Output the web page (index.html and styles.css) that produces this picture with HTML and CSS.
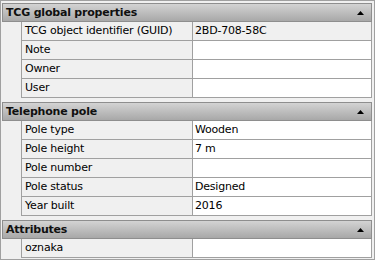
FILE: index.html
```html
<!DOCTYPE html>
<html>
<head>
    <title>Properties</title>
    <link rel="stylesheet" href="styles.css">
</head>
<body>
    <div class="property-grid">
        <!-- TCG global properties -->
        <div class="section">
            <div class="section-header">
                <span>TCG global properties</span>
                <svg class="collapse" width="7" height="4" viewBox="0 0 7 4"><path d="M3.5 0 L7 4 L0 4 Z"/></svg>
            </div>
            <div class="rows">
                <div class="row readonly"><div class="label">TCG object identifier (GUID)</div><div class="value">2BD-708-58C</div></div>
                <div class="row"><div class="label">Note</div><div class="value"></div></div>
                <div class="row"><div class="label">Owner</div><div class="value"></div></div>
                <div class="row"><div class="label">User</div><div class="value"></div></div>
            </div>
        </div>

        <!-- Telephone pole -->
        <div class="section">
            <div class="section-header">
                <span>Telephone pole</span>
                <svg class="collapse" width="7" height="4" viewBox="0 0 7 4"><path d="M3.5 0 L7 4 L0 4 Z"/></svg>
            </div>
            <div class="rows">
                <div class="row"><div class="label">Pole type</div><div class="value">Wooden</div></div>
                <div class="row"><div class="label">Pole height</div><div class="value">7 m</div></div>
                <div class="row"><div class="label">Pole number</div><div class="value"></div></div>
                <div class="row"><div class="label">Pole status</div><div class="value">Designed</div></div>
                <div class="row"><div class="label">Year built</div><div class="value">2016</div></div>
            </div>
        </div>

        <!-- Attributes -->
        <div class="section">
            <div class="section-header">
                <span>Attributes</span>
                <svg class="collapse" width="7" height="4" viewBox="0 0 7 4"><path d="M3.5 0 L7 4 L0 4 Z"/></svg>
            </div>
            <div class="rows">
                <div class="row"><div class="label">oznaka</div><div class="value"></div></div>
            </div>
        </div>
    </div>
</body>
</html>
```

FILE: styles.css
```css
body {
    margin: 0;
    font-family: "DejaVu Sans", sans-serif;
    font-size: 11px;
    letter-spacing: -0.2px;
    color: #000;
    background-color: #f0f0f0;
}

/* outer frame of the grid */
.property-grid {
    width: 375px;
    height: 260px;
    box-sizing: border-box;
    border: 1px solid #a0a0a0;
    padding: 2px 2px 0 1px;
    display: flex;
    flex-direction: column;
    gap: 4px;
    background-color: #f0f0f0;
}

/* grey category bar */
.section-header {
    height: 19px;
    box-sizing: border-box;
    border: 1px solid #8e8e8e;
    background: linear-gradient(#d3d3d3, #a8a8a8);
    display: flex;
    align-items: center;
    justify-content: space-between;
    padding: 0 7px 0 3px;
    font-weight: bold;
    color: #101010;
}

.collapse {
    fill: #000;
}

/* rows are indented under the header */
.rows {
    margin-left: 19px;
    border-left: 1px solid #a0a0a0;
    border-right: 1px solid #a0a0a0;
}

.row {
    display: flex;
    height: 19px;
    box-sizing: border-box;
    border-bottom: 1px solid #a0a0a0;
}

.label {
    width: 171px;
    padding-left: 3px;
    box-sizing: border-box;
    border-right: 1px solid #a0a0a0;
    background-color: #f0f0f0;
    line-height: 18px;
    white-space: nowrap;
}

.value {
    flex: 1;
    padding-left: 2px;
    background-color: #fff;
    line-height: 18px;
    white-space: nowrap;
}

.row.readonly .value {
    background-color: #f0f0f0;
}
```
